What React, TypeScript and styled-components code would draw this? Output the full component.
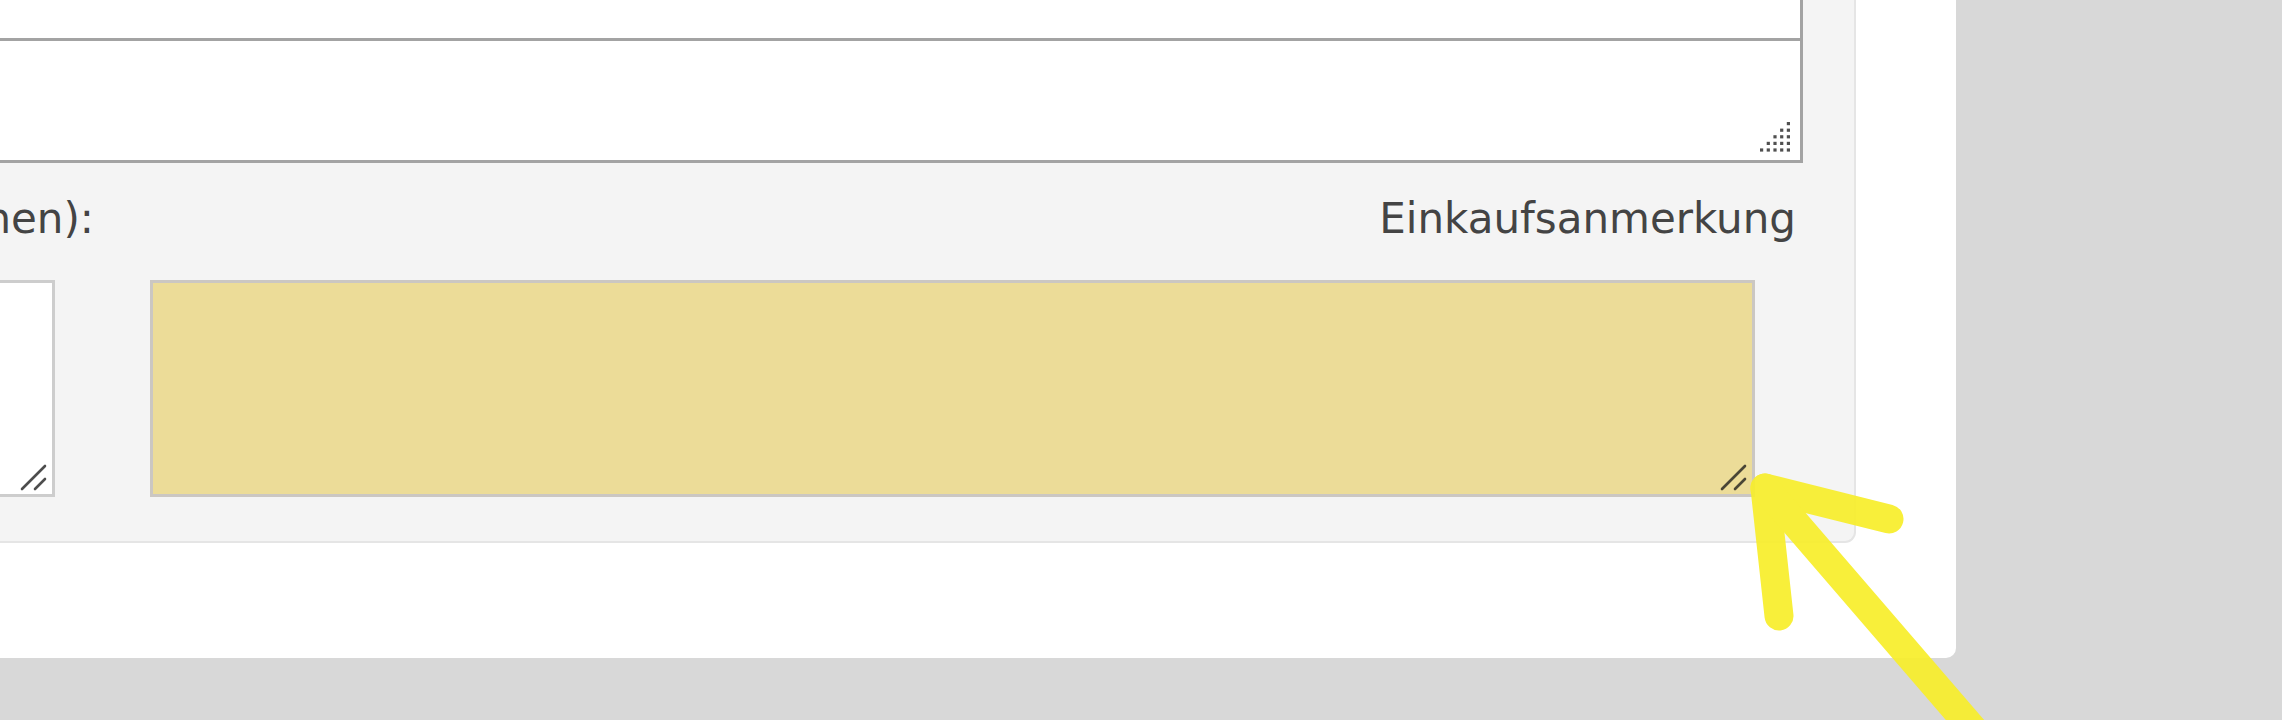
import React from "react";
import styled, {createGlobalStyle} from "styled-components";

const GlobalStyle = createGlobalStyle`
  html, body {
    margin: 0;
    padding: 0;
    background: #d8d8d8;
    overflow: hidden;
  }
`;

const ResizeGrip = ({color = "#4d4d4d"}: { color?: string }) => (
    <Grip width="34" height="34" viewBox="0 0 34 34">
        <line x1="4" y1="29" x2="27" y2="6" stroke={color} strokeWidth="2.6" strokeLinecap="round"/>
        <line x1="17" y1="29" x2="27" y2="19" stroke={color} strokeWidth="2.6" strokeLinecap="round"/>
    </Grip>
);

const DotGrip = () => {
    const dots = [];
    for (let row = 0; row < 5; row++) {
        for (let col = 4 - row; col < 5; col++) {
            dots.push(<rect key={`${row}-${col}`} x={col * 6.7} y={row * 6.6} width="3.2" height="3.2" fill="#505050"/>);
        }
    }
    return (
        <Dots width="31" height="30" viewBox="0 0 31 30">
            {dots}
        </Dots>
    );
};

const Arrow = () => (
    <ArrowLayer width="2282" height="720" viewBox="0 0 2282 720">
        <g stroke="#f8ee2c" strokeWidth="29" strokeLinecap="round" strokeLinejoin="round" fill="none" opacity="0.93">
            <path d="M1889 519 L1765 488 L1779 616"/>
            <path d="M1765 488 L2015 778"/>
        </g>
    </ArrowLayer>
);

class App extends React.Component {
    render() {
        return (
            <Page>
                <GlobalStyle/>
                <Card>
                    <Panel>
                        <EditorTop/>
                        <EditorBody>
                            <DotGrip/>
                        </EditorBody>

                        <LabelRow>
                            <Label overhang={10}>Lieferhinweis (auf Lieferschein sichtbar machen):</Label>
                            <Label overhang={7}>Einkaufsanmerkung</Label>
                        </LabelRow>

                        <FieldRow>
                            <FieldWrap>
                                <Field defaultValue=""/>
                                <ResizeGrip/>
                            </FieldWrap>
                            <FieldWrap>
                                <Field highlighted defaultValue=""/>
                                <ResizeGrip color="#4a4636"/>
                            </FieldWrap>
                        </FieldRow>
                    </Panel>
                </Card>
                <Arrow/>
            </Page>
        );
    }
}

const Page = styled.div`
  position: relative;
  width: 2282px;
  height: 720px;
  background: #d8d8d8;
  display: flex;
  align-items: flex-start;
  overflow: hidden;
  font-family: "DejaVu Sans", Verdana, sans-serif;
`;

const Card = styled.div`
  box-sizing: border-box;
  margin-left: -400px;
  width: 2356px;
  height: 658px;
  background: #ffffff;
  border-radius: 0 0 10px 0;
  padding: 0 100px 115px 60px;
  display: flex;
  flex-direction: column;
`;

const Panel = styled.div`
  box-sizing: border-box;
  flex: 1;
  background: #f4f4f4;
  border: 2px solid #e5e5e5;
  border-top: none;
  border-radius: 0 0 11px 11px;
  padding: 0 51px 43px 40px;
  display: flex;
  flex-direction: column;
`;

const EditorTop = styled.div`
  height: 38px;
  background: #ffffff;
  border-right: 3px solid #a3a3a3;
  border-bottom: 3px solid #a3a3a3;
`;

const EditorBody = styled.div`
  position: relative;
  height: 119px;
  background: #ffffff;
  border-right: 3px solid #a3a3a3;
  border-bottom: 3px solid #a3a3a3;
`;

const Dots = styled.svg`
  position: absolute;
  right: 9px;
  bottom: 8px;
`;

const LabelRow = styled.div`
  margin-top: 32px;
  display: grid;
  grid-template-columns: minmax(0, 1fr) 1604px;
  column-gap: 95px;
  height: 47px;
`;

const Label = styled.div<{ overhang: number }>`
  display: flex;
  justify-content: flex-end;
  min-width: 0;
  white-space: nowrap;
  font-size: 42px;
  line-height: 47px;
  color: #444444;
  margin-right: ${p => p.overhang}px;
`;

const FieldRow = styled.div`
  margin-top: 38px;
  margin-right: 48px;
  height: 217px;
  display: grid;
  grid-template-columns: minmax(0, 1fr) 1605px;
  column-gap: 95px;
`;

const FieldWrap = styled.div`
  position: relative;
  height: 100%;
`;

const Field = styled.textarea<{ highlighted?: boolean }>`
  box-sizing: border-box;
  display: block;
  width: 100%;
  height: 100%;
  margin: 0;
  padding: 8px;
  resize: none;
  outline: none;
  font-family: "DejaVu Sans", sans-serif;
  font-size: 30px;
  background: ${p => p.highlighted ? "#ecdc98" : "#ffffff"};
  border: 3px solid ${p => p.highlighted ? "#cbc7c2" : "#cdcdcd"};
`;

const Grip = styled.svg`
  position: absolute;
  right: 3px;
  bottom: 3px;
`;

const ArrowLayer = styled.svg`
  position: absolute;
  left: 0;
  top: 0;
  pointer-events: none;
`;

export default App;
